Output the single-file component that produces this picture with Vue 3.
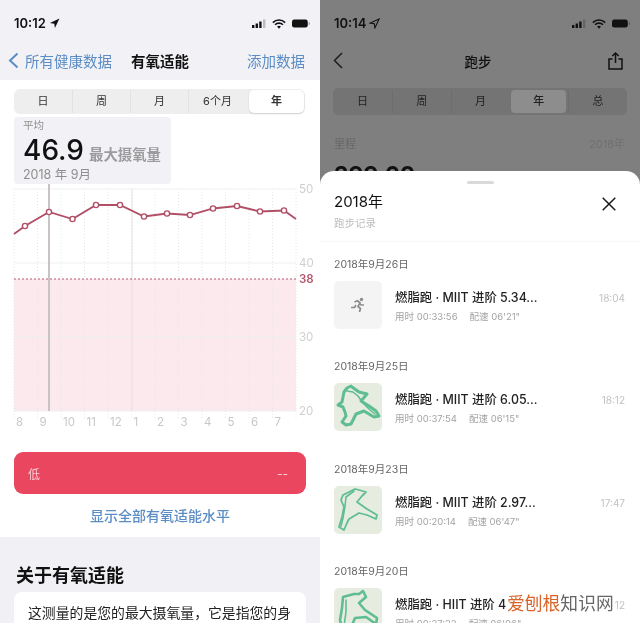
<script setup>
// 左边: 有氧适能, 右边: 跑步记录
const leftTabs = ['日', '周', '月', '6个月', '年']
const rightTabs = ['日', '周', '月', '年', '总']
const months = [8, 9, 10, 11, 12, 1, 2, 3, 4, 5, 6, 7]

// chart points, svg coords (svg starts at x=0, y=184)
const points = [
  [25, 42], [49, 28], [72.5, 35], [96, 21], [120, 21], [144, 32.5],
  [167, 29.5], [190, 31], [213, 24.5], [237, 22], [260, 27.5], [284, 26.5]
]
const line = [[14, 50], ...points, [296, 35]].map(p => p.join(',')).join(' ')
const verticals = Array.from({ length: 13 }, (_, i) => 14 + i * 23.5)
const axis = [
  { y: 5, label: '50' },
  { y: 79, label: '40' },
  { y: 153, label: '30' },
  { y: 227, label: '20' }
]

const records = [
  { date: '2018年9月26日', title: '燃脂跑 · MIIT 进阶 5.34...', time: '18:04', used: '00:33:56', pace: `06'21"`, route: '', inner: '', sw: 0 },
  {
    date: '2018年9月25日', title: '燃脂跑 · MIIT 进阶 6.05...', time: '18:12', used: '00:37:54', pace: `06'15"`, sw: 3,
    route: 'M17 3 L13 5 L10 9 L9 14 L8 19 L4 22 L9 24 L11 29 L12 33 L8 39 L12 42 L17 41 L20 35 L22 31 L30 28 L35 31 L40 34 L45 33 L42 28 L35 23 L27 18 L33 11 L25 9 L18 4',
    inner: 'M13 8 L19 9 L24 13 L29 20 L36 27 L41 31'
  },
  {
    date: '2018年9月23日', title: '燃脂跑 · MIIT 进阶 2.97...', time: '17:47', used: '00:20:14', pace: `06'47"`, sw: 1.8,
    route: 'M21 3 L15 6 L9 9 L7 14 L10 21 L8 31 L5 41 L10 44 L13 37 L15 33 L25 27 L33 29 L42 33 L43 29 L33 23 L23 16 L28 10 L32 6 L25 4 Z',
    inner: 'M20 5 L12 11 L11 20 L9 32 L7 40'
  },
  {
    date: '2018年9月20日', title: '燃脂跑 · HIIT 进阶 4', time: '12', used: '00:27:23', pace: `06'06"`, sw: 2.6,
    route: 'M29 3 L25 6 L20 6 L9 9 L8 20 L6 32 L9 44 L16 42 L21 30 L32 29 L42 36 L43 30 L31 22 L25 15 L32 9 Z',
    inner: 'M12 12 L12 24 L10 38'
  }
]
</script>

<template>
  <div class="page">
    <!-- 左屏 -->
    <section class="phone">
      <header class="top">
        <div class="status">
          <span class="clock">10:12
            <svg width="11" height="11" viewBox="0 0 10 10"><path d="M9.5.5.8 4.6l4 .6.6 4z" fill="#111" /></svg>
          </span>
          <span class="status-icons">
            <svg width="14" height="9" viewBox="0 0 14 9"><path d="M0 6h2.400v3H0zM3.600 4.400H6V9H3.600zM7.200 2.500h2.400V9H7.200z" fill="#111" /><path d="M11 .5h2.400V9H11z" fill="#bbb" /></svg>
            <svg width="14" height="10" viewBox="0 0 13 9"><path d="M.8 3.200a8 8 0 0 1 11.400 0M2.800 5.200a5.200 5.200 0 0 1 7.400 0" fill="none" stroke="#111" stroke-width="1.500" /><path d="M4.700 6.900 6.500 8.800l1.800-1.900a2.600 2.600 0 0 0-3.600 0z" fill="#111" /></svg>
            <svg width="18" height="9" viewBox="0 0 20 9"><rect width="17.500" height="9" rx="2.500" fill="#111" /><rect x="18.500" y="3" width="1.300" height="3" rx=".6" fill="#999" /></svg>
          </span>
        </div>
        <nav class="nav">
          <span class="back">
            <svg width="11" height="17" viewBox="0 0 11 17"><path d="M9.500 1.500 2 8.500l7.500 7" fill="none" stroke="#5b8cc4" stroke-width="2" /></svg>
            所有健康数据
          </span>
          <b class="nav-title">有氧适能</b>
          <span class="add">添加数据</span>
        </nav>
      </header>

      <div class="content">
        <div class="tabs">
          <span v-for="t in leftTabs" :key="t" class="tab" :class="{ on: t === '年' }">{{ t }}</span>
        </div>
        <div class="stat">
          <div class="stat-cap">平均</div>
          <div class="stat-main"><strong>46.9</strong><em>最大摄氧量</em></div>
          <div class="stat-date">2018 年 9月</div>
        </div>

        <svg class="chart" width="320" height="236" viewBox="0 0 320 236">
          <rect x="14" y="95" width="282" height="132" fill="#fbe9ed" />
          <line v-for="x in verticals" :key="x" :x1="x" :x2="x" y1="5" y2="236" stroke="#e6e6e6" stroke-dasharray="1 2" />
          <line v-for="a in axis" :key="a.y" x1="14" x2="296" :y1="a.y" :y2="a.y" stroke="#efefef" />
          <line x1="132" x2="132" y1="5" y2="227" stroke="#e8dfe1" />
          <line x1="49" x2="49" y1="0" y2="227" stroke="#c9c3c6" stroke-width="2" />
          <line x1="14" x2="296" y1="95" y2="95" stroke="#b5566c" stroke-dasharray="2 2" />
          <polyline :points="line" fill="none" stroke="#b14f66" stroke-width="1.800" />
          <circle v-for="p in points" :key="p[0]" :cx="p[0]" :cy="p[1]" r="2.600" fill="#fff" stroke="#b14f66" stroke-width="1.400" />
          <text v-for="a in axis" :key="a.label" x="299" :y="a.y + 4" class="axis">{{ a.label }}</text>
          <text x="299" y="99" class="axis mark">38</text>
        </svg>
        <div class="months">
          <span v-for="m in months" :key="m">{{ m }}</span>
        </div>

        <div class="low"><span>低</span><span>--</span></div>
        <div class="show-all">显示全部有氧适能水平</div>
      </div>

      <div class="about">
        <h2>关于有氧适能</h2>
        <div class="about-card">这测量的是您的最大摄氧量，它是指您的身</div>
      </div>
    </section>

    <!-- 右屏 -->
    <section class="phone dark">
      <div class="behind">
        <div class="status">
          <span class="clock">10:14
            <svg width="11" height="11" viewBox="0 0 10 10"><path d="M9.200.8 1 4.600l3.800.6.600 3.800z" fill="none" stroke="#111" /></svg>
          </span>
          <span class="status-icons">
            <svg width="14" height="9" viewBox="0 0 14 9"><path d="M0 6h2.400v3H0zM3.600 4.400H6V9H3.600zM7.200 2.500h2.400V9H7.200z" fill="#111" /><path d="M11 .5h2.400V9H11z" fill="#666" /></svg>
            <svg width="14" height="10" viewBox="0 0 13 9"><path d="M.8 3.200a8 8 0 0 1 11.400 0M2.800 5.200a5.200 5.200 0 0 1 7.400 0" fill="none" stroke="#111" stroke-width="1.500" /><path d="M4.700 6.900 6.500 8.800l1.800-1.900a2.600 2.600 0 0 0-3.600 0z" fill="#111" /></svg>
            <svg width="18" height="9" viewBox="0 0 20 9"><rect width="17.500" height="9" rx="2.500" fill="#111" /><rect x="18.500" y="3" width="1.300" height="3" rx=".6" fill="#555" /></svg>
          </span>
        </div>
        <nav class="nav run-nav">
          <svg width="10" height="17" viewBox="0 0 10 17"><path d="M9 1 1.500 8.500 9 16" fill="none" stroke="#1c1c1c" stroke-width="1.500" /></svg>
          <b>跑步</b>
          <svg width="15" height="18" viewBox="0 0 15 18"><path d="M7.500 11V1.200M4.300 4 7.500 1l3.200 3M4.500 7H1v10h13V7h-3.500" fill="none" stroke="#111" stroke-width="1.500" /></svg>
        </nav>
        <div class="run-tabs">
          <span v-for="t in rightTabs" :key="t" class="run-tab" :class="{ on: t === '年' }">{{ t }}</span>
        </div>
        <div class="mileage"><span>里程</span><span>2018年</span></div>
        <div class="big">299.60</div>
      </div>

      <div class="sheet">
        <div class="handle"></div>
        <div class="sheet-head">
          <div>
            <div class="sheet-year">2018年</div>
            <div class="sheet-sub">跑步记录</div>
          </div>
          <svg width="14" height="14" viewBox="0 0 14 14"><path d="M.7.7 13.300 13.300M13.300.7.7 13.300" stroke="#1a1a1a" stroke-width="1.500" /></svg>
        </div>

        <div v-for="r in records" :key="r.date" class="record">
          <div class="record-date">{{ r.date }}</div>
          <div class="record-row">
            <div class="thumb" :class="{ empty: !r.route }">
              <svg v-if="r.route" width="48" height="48" viewBox="0 0 48 48" fill="none" stroke="#5fbd92" stroke-linejoin="round" stroke-linecap="round">
                <path :d="r.route" :stroke-width="r.sw" />
                <path :d="r.inner" stroke-width="1.600" />
              </svg>
              <svg v-else width="16" height="16" viewBox="0 0 16 16">
                <circle cx="11.500" cy="2.500" r="1.700" fill="#8b8b8b" />
                <path d="M1 10.500h3.500l1.500-2.500M4.500 5l3-1.200 2.500 2-2 3.700 2.500 2-1 3.500M9.500 6.500l1.500 1.500h3" fill="none" stroke="#8b8b8b" stroke-width="1.700" />
              </svg>
            </div>
            <div class="record-info">
              <div class="record-title">{{ r.title }}</div>
              <div class="record-meta"><span>用时 {{ r.used }}</span><span>配速 {{ r.pace }}</span></div>
            </div>
            <div class="record-time">{{ r.time }}</div>
          </div>
        </div>
        <div class="mark-text"><i>爱刨根</i>知识网</div>
      </div>
    </section>
  </div>
</template>

<style>
html, body { background: #fff; overflow: hidden; }
</style>

<style scoped>
.page {
  width: 640px;
  height: 623px;
  display: flex;
  overflow: hidden;
  font-family: Inter, "Noto Sans CJK SC", sans-serif;
  color: #111;
  filter: blur(0.4px);
}
.phone {
  width: 320px;
  height: 623px;
  overflow: hidden;
  background: #fff;
}

/* status + nav */
.top {
  height: 80px;
  background: #f2f2f6;
}
.status {
  height: 46px;
  padding: 16px 10px 0 14px;
  box-sizing: border-box;
  display: flex;
  justify-content: space-between;
  align-items: flex-start;
}
.clock {
  font-size: 13px;
  font-weight: 600;
  line-height: 15px;
  display: flex;
  align-items: center;
  gap: 3px;
}
.status-icons {
  display: flex;
  align-items: center;
  gap: 6px;
  height: 15px;
}
.nav {
  height: 29px;
  display: flex;
  align-items: center;
  font-size: 14.5px;
}
.back {
  display: flex;
  align-items: center;
  gap: 6px;
  padding-left: 8px;
  color: #5b8cc4;
}
.nav-title {
  margin-left: 19px;
  font-weight: 600;
}
.add {
  margin-left: auto;
  padding-right: 15px;
  color: #5b8cc4;
}

/* left */
.content {
  height: 457px;
  padding-top: 9px;
  box-sizing: border-box;
}
.tabs {
  margin: 0 15px 3px 14px;
  height: 25px;
  border-radius: 6px;
  background: #eeeeef;
  display: grid;
  grid-template-columns: 58px 58px 58px 58px 1fr;
  align-items: center;
  font-size: 11px;
  color: #333;
}
.tab {
  text-align: center;
  line-height: 23px;
  border-left: 1px solid #e2e2e4;
}
.tab:first-child { border-left: 0; }
.tab.on {
  background: #fff;
  border: 0;
  border-radius: 5px;
  font-weight: 600;
  margin: 0 1px 0 3px;
  box-shadow: 0 1px 2px #0002;
}
.stat {
  width: 157px;
  height: 67px;
  margin-left: 14px;
  padding: 2px 0 0 9px;
  box-sizing: border-box;
  background: #f2f2f6;
  border-radius: 4px;
}
.stat-cap {
  font-size: 10.5px;
  line-height: 14px;
  color: #8e8e8e;
}
.stat-main {
  display: flex;
  align-items: baseline;
  gap: 5px;
  height: 34px;
  line-height: 35px;
}
.stat-main strong {
  font-size: 28px;
  font-weight: 500;
}
.stat-main em {
  font-style: normal;
  font-size: 14.4px;
  font-weight: 600;
  color: #9c9c9e;
}
.stat-date {
  font-size: 12.5px;
  line-height: 15px;
  color: #8e8e8e;
}
.chart {
  display: block;
  overflow: visible;
}
.axis {
  font-size: 11.5px;
  fill: #cfcfcf;
}
.axis.mark {
  fill: #b5566c;
  font-weight: 600;
}
.months {
  width: 282px;
  margin: -6px 0 0 14px;
  display: grid;
  grid-template-columns: repeat(12, 1fr);
  font-size: 11.5px;
  line-height: 16px;
  color: #c8c8c8;
}
.months span { padding-left: 2px; }
.low {
  margin: 22px 14px 0;
  height: 42px;
  padding: 0 18px 0 14px;
  border-radius: 9px;
  background: #ea4660;
  color: #f9cdd3;
  font-size: 12px;
  display: flex;
  justify-content: space-between;
  align-items: center;
}
.show-all {
  margin-top: 13px;
  text-align: center;
  font-size: 14px;
  line-height: 17px;
  font-weight: 500;
  color: #5b8cc4;
}
.about {
  height: 86px;
  padding: 28px 14px 0;
  box-sizing: border-box;
  background: #f1f1f5;
}
.about h2 {
  margin: 0 0 6px 2px;
  font-size: 18px;
  line-height: 21px;
  font-weight: 600;
}
.about-card {
  height: 60px;
  padding: 11px 0 0 14px;
  box-sizing: border-box;
  border-radius: 8px;
  background: #fff;
  font-size: 13.85px;
  line-height: 20px;
  white-space: nowrap;
  color: #222;
}

/* right */
.dark { background: #7f7f7f; }
.behind {
  height: 171px;
  overflow: hidden;
}
.run-nav {
  justify-content: space-between;
  padding: 0 17px 0 13px;
}
.run-nav b {
  margin-left: 5px;
  font-size: 13.5px;
  font-weight: 500;
}
.run-tabs {
  margin: 13px 13px 0;
  height: 27px;
  border-radius: 5px;
  background: #747474;
  display: grid;
  grid-template-columns: repeat(5, 1fr);
  align-items: center;
  font-size: 11px;
  color: #222;
}
.run-tab {
  text-align: center;
  line-height: 23px;
  border-left: 1px solid #6d6d6d;
}
.run-tab:first-child { border-left: 0; }
.run-tab.on {
  margin: 0 2px;
  background: #8d8d8d;
  border: 0;
  border-radius: 4px;
  font-weight: 500;
}
.mileage {
  margin: 21px 15px 0 14px;
  display: flex;
  justify-content: space-between;
  font-size: 11px;
  line-height: 16px;
  color: #686868;
}
.mileage span:last-child { color: #707070; }
.big {
  margin: 8px 0 0 14px;
  font-size: 23px;
  font-weight: 700;
  line-height: 30px;
}
.sheet {
  position: relative;
  height: 452px;
  overflow: hidden;
  background: #fff;
  border-radius: 14px 14px 0 0;
}
.handle {
  width: 27px;
  height: 3px;
  margin: 10px auto 0;
  border-radius: 2px;
  background: #dadada;
}
.sheet-head {
  height: 58px;
  padding: 7px 24px 0 14px;
  box-sizing: border-box;
  display: flex;
  justify-content: space-between;
  align-items: flex-start;
  border-bottom: 1px solid #f8f8f8;
}
.sheet-head svg { margin-top: 6px; }
.sheet-year {
  font-size: 15px;
  line-height: 22px;
}
.sheet-sub {
  margin-top: 3px;
  font-size: 10.5px;
  line-height: 15px;
  color: #bdbdbd;
}
.record {
  height: 102.3px;
  padding: 15px 15px 0 14px;
  box-sizing: border-box;
}
.record-date {
  font-size: 10.5px;
  line-height: 15px;
  color: #666;
}
.record-row {
  margin-top: 9px;
  display: flex;
  align-items: flex-start;
}
.thumb {
  flex: none;
  width: 48px;
  height: 48px;
  border-radius: 5px;
  background: #e6ecdf;
  display: flex;
  align-items: center;
  justify-content: center;
}
.thumb.empty { background: #f4f4f4; }
.record-info {
  flex: 1;
  margin-left: 13px;
  padding-top: 8px;
}
.record-title {
  font-size: 12.4px;
  line-height: 18px;
  font-weight: 500;
  color: #222;
  white-space: nowrap;
}
.record-meta {
  margin-top: 3px;
  display: flex;
  gap: 12px;
  font-size: 9.5px;
  line-height: 14px;
  color: #a3a3a3;
}
.record-time {
  margin-top: 9px;
  font-size: 10px;
  line-height: 16px;
  color: #c2c2c2;
}
/* watermark sits over the last row */
.mark-text {
  position: absolute;
  left: 187px;
  top: 421px;
  font-size: 17.8px;
  line-height: 24px;
  color: #666;
  white-space: nowrap;
}
.mark-text i {
  font-style: normal;
  color: #d9642a;
}
</style>
